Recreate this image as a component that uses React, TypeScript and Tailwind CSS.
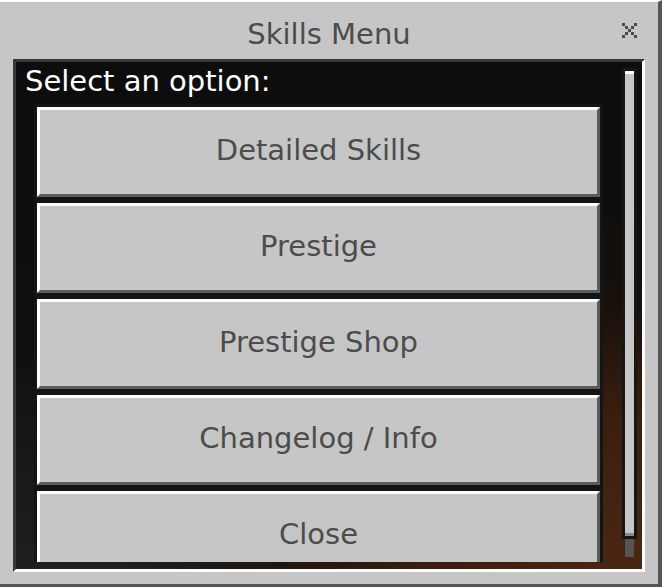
import React from 'react';

const options = ['Detailed Skills', 'Prestige', 'Prestige Shop', 'Changelog / Info', 'Close'];

// 5x5 pixel "x" used for the window close button
const xCells = [
  [0, 0], [4, 0], [1, 1], [3, 1], [2, 2], [1, 3], [3, 3], [0, 4], [4, 4],
];

const CloseGlyph: React.FC = () => (
  <svg width="15" height="15" viewBox="0 0 15 15" shapeRendering="crispEdges">
    {xCells.map(([cx, cy]) => (
      <rect key={`${cx}-${cy}`} x={cx * 3} y={cy * 3} width="3" height="3" fill="#4c4c4c" />
    ))}
  </svg>
);

const FormButton: React.FC<{ label: string }> = ({ label }) => (
  <div className="h-[96px] shrink-0 border-[3px] border-[#141414]">
    <button className="w-full h-full flex justify-center pt-[23px] bg-[#c6c6c6] border-[3px] border-t-white border-l-white border-r-[#5c5c5c] border-b-[#5c5c5c] text-[#4c4c4c] text-[29px] leading-[34px]">
      {label}
    </button>
  </div>
);

export default function App() {
  return (
    <div className="w-[662px] h-[587px] flex flex-col bg-[#c6c6c6] border-t-2 border-t-white border-r-4 border-r-[#555555] border-b-[3px] border-b-[#555555] font-['DejaVu_Sans',sans-serif] select-none">
      {/* title bar */}
      <div className="relative h-[57px] shrink-0 pt-[15px] text-center text-[29px] leading-[34px] text-[#4c4c4c]">
        Skills Menu
        <button className="absolute right-[21px] top-[21px]">
          <CloseGlyph />
        </button>
      </div>

      {/* inset panel with the world showing behind it */}
      <div className="mx-[13px] h-[513px] shrink-0 border-[3px] border-t-[#373737] border-l-[#373737] border-r-white border-b-white">
        <div className="h-full flex bg-[radial-gradient(ellipse_520px_380px_at_100%_100%,#4a2713_0%,#3a1e0f_40%,rgba(30,16,8,0.6)_70%,transparent_100%),linear-gradient(#0d0d0d,#0f0f0f_55%,#1f1f1f)]">
          <div className="flex-1 h-[500px] overflow-hidden">
            <p className="pl-[9px] pt-[2px] text-white text-[29px] leading-[34px]">Select an option:</p>
            <div className="mt-[6px] ml-[18px] w-[569px] flex flex-col">
              {options.map((o) => (
                <FormButton key={o} label={o} />
              ))}
            </div>
          </div>

          {/* scrollbar */}
          <div className="w-[15px] mr-[5px] pt-[6px] flex flex-col">
            <div className="h-[471px] border-[3px] border-[#161616]">
              <div className="h-full bg-[#c6c6c6] border-t-[3px] border-t-white border-b-[3px] border-b-[#8b8b8b]" />
            </div>
            <div className="mx-[3px] h-[18px] bg-[#555555]" />
          </div>
        </div>
      </div>
    </div>
  );
}
